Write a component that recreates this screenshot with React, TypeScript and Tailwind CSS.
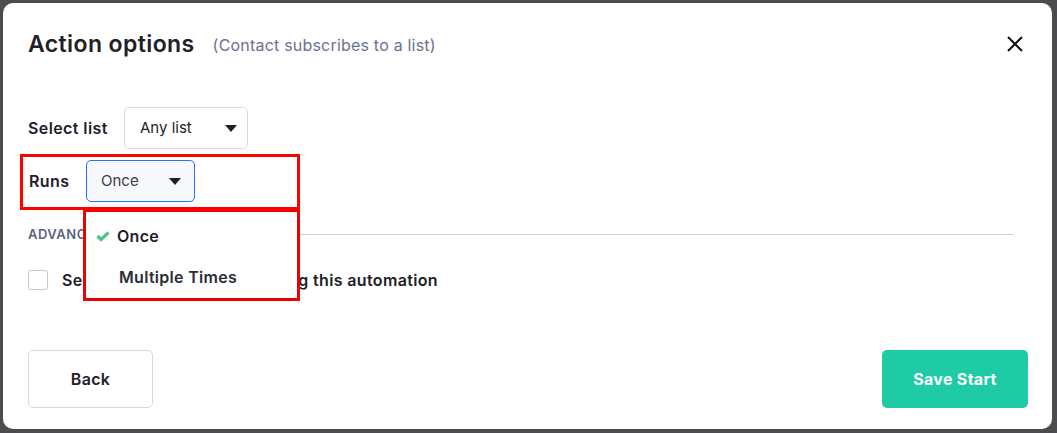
import React, { useState } from "react";

const Caret = () => (
  <svg width="12" height="7" viewBox="0 0 12 7" className="ml-auto">
    <path d="M0 0 L12 0 L6 7 Z" fill="#1f2028" />
  </svg>
);

const App = () => {
  const [runs, setRuns] = useState<string>("Once");

  return (
    <div
      className="bg-[#4b4b50] w-[1057px] h-[433px] p-[3px] pr-[5px] pb-[4px]"
      style={{ fontFamily: "Inter, 'Noto Sans', sans-serif" }}
    >
      <div className="bg-white rounded-[10px] h-full flex flex-col pl-[25px] pr-[24px] pt-[27px] pb-[21px]">
        {/* Header */}
        <div className="flex items-center h-[28px]">
          <h2 className="text-[23px] font-semibold text-[#1f2028] tracking-[0.4px]">
            Action options
          </h2>
          <span className="ml-[18px] text-[16px] text-[#6b7190] mt-[2px] tracking-[0.2px]">
            (Contact subscribes to a list)
          </span>
          <button className="ml-auto mr-[4px] text-black">
            <svg width="18" height="18" viewBox="0 0 18 18">
              <path d="M2 2 L16 16 M16 2 L2 16" stroke="#111" strokeWidth="2" />
            </svg>
          </button>
        </div>

        {/* Select list */}
        <div className="flex items-center mt-[49px]">
          <label className="text-[16px] font-semibold text-[#1f2028] w-[96px] tracking-[0.4px]">Select list</label>
          <div className="flex items-center w-[124px] h-[42px] border border-[#d5d9e3] rounded-[5px] pl-[15px] pr-[10px] text-[15px] text-[#1f2028]">
            Any list
            <Caret />
          </div>
        </div>

        {/* Runs */}
        <div className="relative mt-[5px] -ml-[8px] w-[280px] h-[56px] border-[3px] border-[#ff0000] flex items-center pl-[6px] pb-[2px]">
          <label className="text-[16px] font-semibold text-[#1f2028] w-[57px] tracking-[0.4px]">Runs</label>
          <div className="flex items-center w-[109px] h-[42px] border border-[#2f6bff] bg-[#f6f8fc] rounded-[5px] pl-[14px] pr-[13px] text-[15px] text-[#3b3d48]">
            {runs}
            <Caret />
          </div>

          {/* Dropdown */}
          <div className="absolute left-[60px] top-[52px] w-[217px] h-[92px] border-[3px] border-[#ff0000] bg-white z-10">
            <div className="h-full bg-white rounded-[4px] shadow-[0_1px_4px_rgba(0,0,0,0.25)] flex flex-col pt-[9px]">
              <button
                onClick={() => setRuns("Once")}
                className="flex items-center h-[30px] pl-[10px] text-[16px] font-semibold text-[#1f2028] tracking-[0.3px]"
              >
                <svg width="14" height="11" viewBox="0 0 14 11" className="mr-[7px]">
                  <path d="M1.5 5 L5 8.5 L12.5 1.5" stroke="#4cc38a" strokeWidth="3.2" fill="none" />
                </svg>
                Once
              </button>
              <button
                onClick={() => setRuns("Multiple Times")}
                className="flex items-center h-[30px] mt-[11px] pl-[33px] text-[16px] font-semibold text-[#2b2d36] tracking-[0.3px]"
              >
                Multiple Times
              </button>
            </div>
          </div>
        </div>

        {/* Advanced */}
        <div className="flex items-center mt-[15px] gap-[10px]">
          <span className="text-[13px] font-semibold text-[#5b6382] tracking-[0.5px]">
            ADVANCED OPTIONS
          </span>
          <div className="flex-1 h-[1px] bg-[#c9cfe0] mr-[15px]" />
        </div>

        <div className="flex items-center mt-[23px]">
          <div className="w-[20px] h-[20px] border border-[#c5c9d4] rounded-[3px] bg-white" />
          <span className="ml-[14px] text-[16px] font-semibold text-[#1f2028] tracking-[0.35px]">
            Send contacts already running this automation
          </span>
        </div>

        {/* Footer */}
        <div className="flex items-center justify-between mt-auto">
          <button className="w-[125px] h-[58px] border border-[#d5d9e6] rounded-[5px] text-[16px] font-semibold text-[#1f2028] bg-white tracking-[0.3px]">
            Back
          </button>
          <button className="w-[146px] h-[58px] rounded-[5px] text-[16px] font-bold text-white bg-[#1ecba4] tracking-[0.3px]">
            Save Start
          </button>
        </div>
      </div>
    </div>
  );
};

export default App;
